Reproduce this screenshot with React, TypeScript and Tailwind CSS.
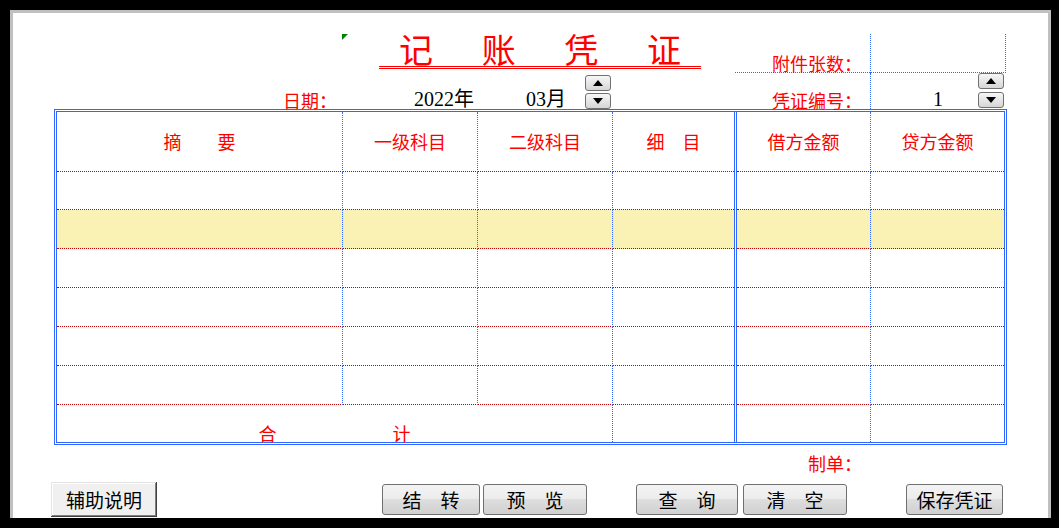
import React from "react";

// 记账凭证：Excel 风格的录入表单。
const RED = "text-[#ff0000]";
const CJK = "font-['Noto_Sans_CJK_SC',sans-serif]";
const NUM = "font-['Liberation_Serif','Noto_Sans_CJK_SC',serif]";

function Arrow({ up }: { up: boolean }) {
  return (
    <svg width="10" height="6" viewBox="0 0 10 6">
      <path d={up ? "M0 6 L5 0 L10 6 Z" : "M0 0 L10 0 L5 6 Z"} fill="#000" />
    </svg>
  );
}

function Spinner({ gap = 2 }: { gap?: number }) {
  const btn =
    "flex h-[16px] w-[26px] items-center justify-center rounded-[3px] border border-[#707070] bg-linear-to-b from-[#f7f7f7] to-[#d6d6d6]";
  return (
    <div className="flex flex-col" style={{ gap }}>
      <div className={btn}>
        <Arrow up />
      </div>
      <div className={btn}>
        <Arrow up={false} />
      </div>
    </div>
  );
}

function Button({ label, className }: { label: string; className: string }) {
  return (
    <div
      className={`flex h-[31px] items-center justify-center rounded-[3px] border border-[#707070] bg-[linear-gradient(#f3f3f3,#ececec_50%,#dedede_50%,#d0d0d0)] text-[19px] leading-none text-black ${CJK} ${className}`}
    >
      {label}
    </div>
  );
}

const dotR = "border-r border-dotted border-r-[#3366ff]";
const dotB = "border-b border-dotted border-b-[#c00000]";

function HeaderCell({ text, right }: { text: string; right?: boolean }) {
  return (
    <div
      className={`flex items-center justify-center pb-[2px] text-[18px] leading-[18px] ${RED} ${dotB} ${right ? dotR : ""}`}
    >
      {text}
    </div>
  );
}

const ROWS = 6;
const YELLOW_ROW = 1;

export default function App() {
  return (
    <div className={`h-[528px] w-[1059px] overflow-hidden bg-black pl-[10px] pt-[10px] ${CJK}`}>
      <div className="h-[508px] w-[1041px] border-[3px] border-b-0 border-[#c0c0c0] bg-white">
        {/* 抬头 */}
        <div className="ml-[41px] flex h-[96px] w-[953px]">
          <div className="flex w-[681px] flex-col">
            <div className="flex h-[59px] items-start pt-[19px]">
              <svg className="ml-[288px] mt-[2px]" width="6" height="6" viewBox="0 0 6 6">
                <path d="M0 0 H6 L0 6 Z" fill="#008000" />
              </svg>
              <div className="ml-[31px] flex w-[322px] flex-col">
                <div className={`flex justify-between px-[20px] text-[34px] leading-[34px] ${RED}`}>
                  {["记", "账", "凭", "证"].map((c) => (
                    <span key={c} className="w-[34px] text-center">
                      {c}
                    </span>
                  ))}
                </div>
                <div className="h-[3px] border-y border-[#ff0000]" />
              </div>
            </div>
            <div className="flex h-[37px] items-end">
              <span className={`ml-[229px] w-[131px] text-[18px] leading-[18px] ${RED}`}>日期：</span>
              <span className={`w-[112px] text-[20px] leading-[20px] text-black ${NUM}`}>2022年</span>
              <span className={`w-[59px] text-[20px] leading-[20px] text-black ${NUM}`}>03月</span>
              <div className="self-start pt-[3px]">
                <Spinner />
              </div>
            </div>
          </div>
          <div className="grid w-[272px] grid-cols-[135px_136px] grid-rows-[39px_36px] pt-[21px]">
            <div className={`flex items-end justify-end pr-[8px] text-[18px] leading-[18px] ${RED} border-b border-dotted border-b-[#3366ff]`}>
              附件张数：
            </div>
            <div className="border-x border-b border-dotted border-[#3366ff]" />
            <div className={`flex items-end justify-end pr-[8px] text-[18px] leading-[18px] ${RED}`}>
              凭证编号：
            </div>
            <div className="flex items-start border-l border-dotted border-[#3366ff]">
              <span className={`ml-[62px] self-end text-[20px] leading-[20px] text-black ${NUM}`}>1</span>
              <div className="ml-[35px]">
                <Spinner gap={3} />
              </div>
            </div>
          </div>
        </div>

        {/* 凭证表格 */}
        <div className="ml-[41px] flex h-[336px] w-[953px] border-[3px] border-double border-[#3366ff]">
          <div className="grid w-[677px] grid-cols-[286px_135px_135px_121px] grid-rows-[60px_38px_39px_39px_39px_39px_39px_37px]">
            <HeaderCell text="摘　　要" right />
            <HeaderCell text="一级科目" right />
            <HeaderCell text="二级科目" right />
            <HeaderCell text="细　目" />
            {Array.from({ length: ROWS }).flatMap((_, r) =>
              [0, 1, 2, 3].map((c) => (
                <div
                  key={`l${r}-${c}`}
                  className={`${dotB} ${c < 3 ? dotR : ""} ${r === YELLOW_ROW ? "bg-[#faf2b4]" : ""}`}
                />
              ))
            )}
            <div className={`col-span-3 flex items-end justify-center ${dotR}`}>
              <div className={`flex w-[152px] justify-between text-[18px] leading-[18px] ${RED}`}>
                <span>合</span>
                <span>计</span>
              </div>
            </div>
            <div />
          </div>
          <div className="w-[3px] border-x border-[#3366ff]" />
          <div className="grid w-[267px] grid-cols-[134px_133px] grid-rows-[60px_38px_39px_39px_39px_39px_39px_37px]">
            <HeaderCell text="借方金额" right />
            <HeaderCell text="贷方金额" />
            {Array.from({ length: ROWS }).flatMap((_, r) =>
              [0, 1].map((c) => (
                <div
                  key={`r${r}-${c}`}
                  className={`${dotB} ${c === 0 ? dotR : ""} ${r === YELLOW_ROW ? "bg-[#faf2b4]" : ""}`}
                />
              ))
            )}
            <div className={dotR} />
            <div />
          </div>
        </div>

        {/* 底部 */}
        <div className="flex h-[73px] flex-col">
          <div className="flex h-[37px]">
            <span className={`ml-[722px] mt-[9px] w-[135px] pr-[8px] text-right text-[18px] leading-[18px] ${RED}`}>
              制单：
            </span>
          </div>
          <div className="flex items-start pl-[38px]">
            <div
              className={`flex h-[35px] w-[106px] items-center justify-center bg-[#f0f0f0] text-[19px] leading-none text-black shadow-[inset_-1px_-1px_#404040,inset_1px_1px_#e3e3e3,inset_-2px_-2px_#808080,inset_2px_2px_#ffffff] ${CJK}`}
            >
              辅助说明
            </div>
            <Button label="结　转" className="ml-[225px] mt-[2px] w-[98px]" />
            <Button label="预　览" className="ml-[3px] mt-[2px] w-[104px]" />
            <Button label="查　询" className="ml-[49px] mt-[2px] w-[102px]" />
            <Button label="清　空" className="ml-[5px] mt-[2px] w-[104px]" />
            <Button label="保存凭证" className="ml-[59px] mt-[2px] w-[97px]" />
          </div>
        </div>
      </div>
    </div>
  );
}
